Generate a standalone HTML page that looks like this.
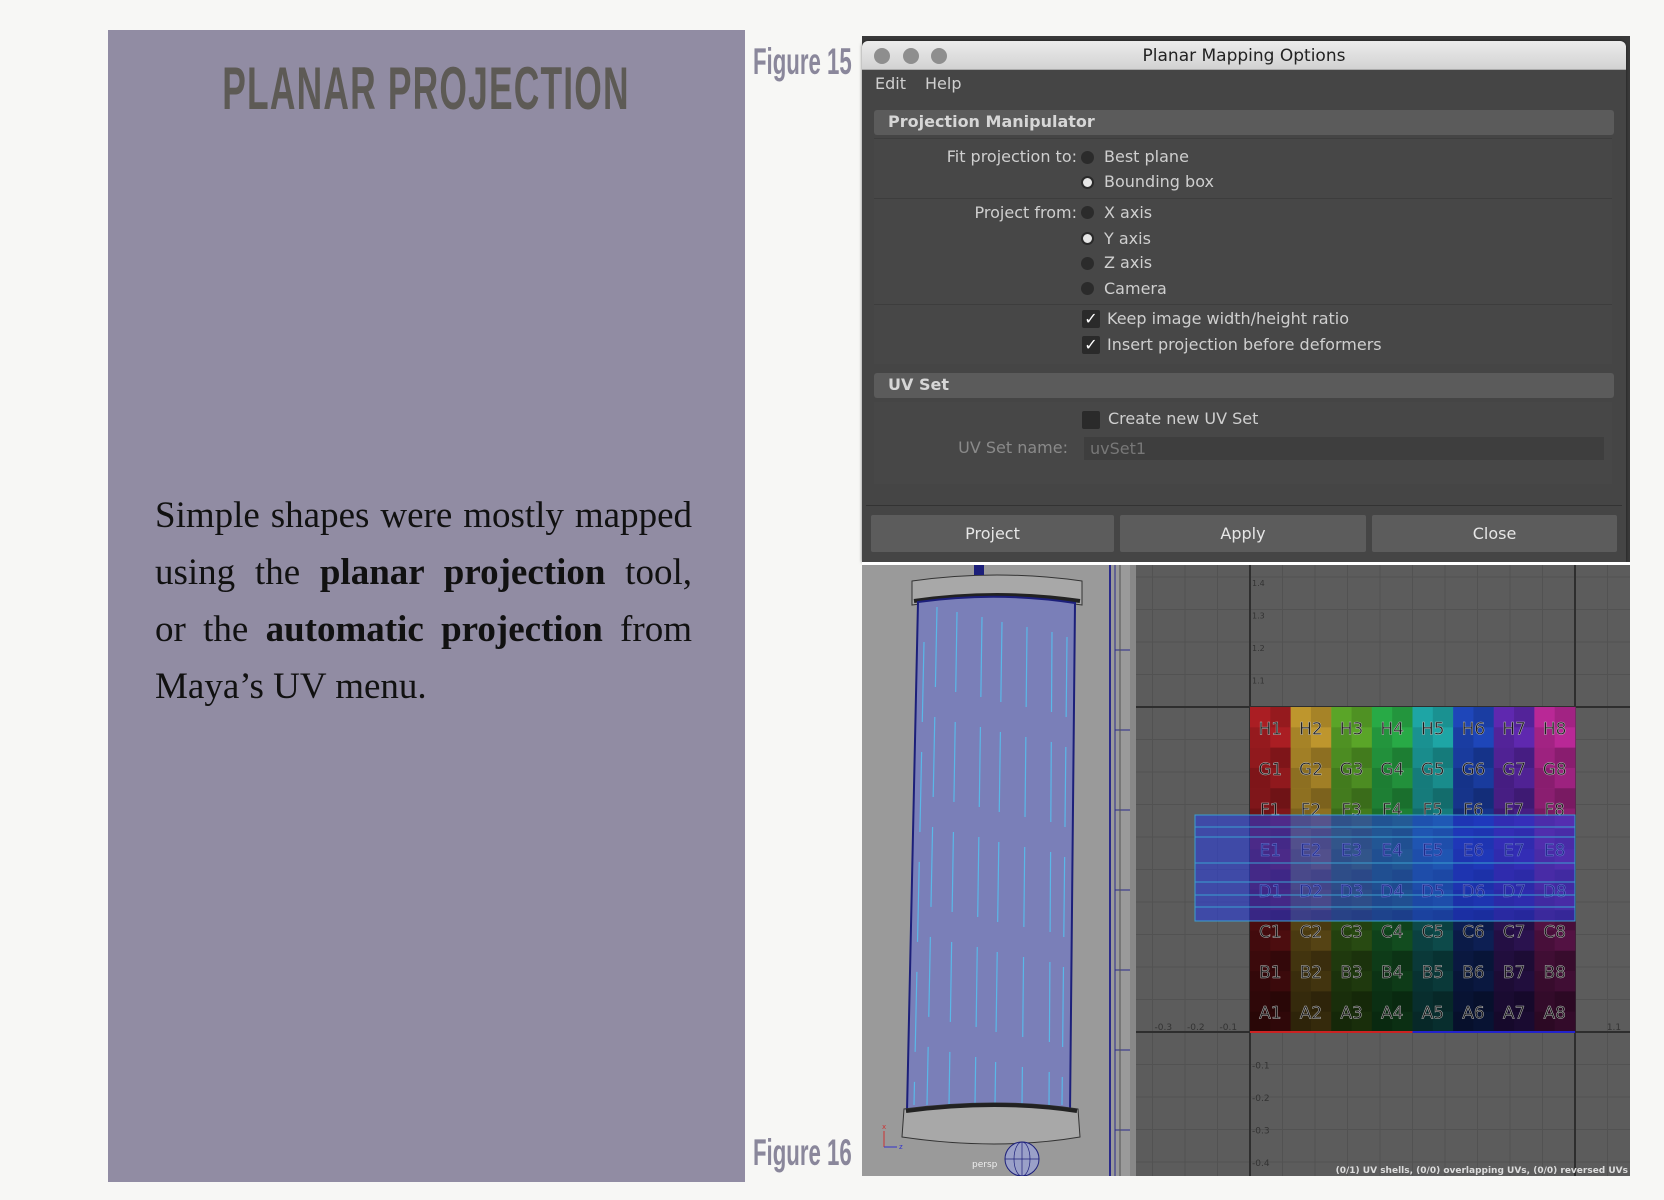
<!DOCTYPE html>
<html><head><meta charset="utf-8">
<style>
*{margin:0;padding:0;box-sizing:border-box}
html,body{width:1664px;height:1200px;overflow:hidden;background:#f7f7f5;position:relative;font-family:"DejaVu Sans","Liberation Sans",sans-serif}
.abs{position:absolute}
#panel{left:108px;top:30px;width:637px;height:1152px;background:#918ca3}
#title{left:318px;top:29px;font-family:"Liberation Sans",sans-serif;font-weight:bold;font-size:60px;color:#5d5a55;line-height:60px;white-space:nowrap;transform:translateX(-50%) scaleX(0.59);letter-spacing:2px}
#body{left:47px;top:457px;width:537px;font-family:"Liberation Serif",serif;font-size:37px;line-height:57px;color:#111}
#body div{text-align:justify;text-align-last:justify;white-space:nowrap}
#body div.last{text-align-last:left}
.fig{font-family:"Liberation Sans",sans-serif;font-weight:bold;color:#8a879b;font-size:37px;white-space:nowrap;transform:scaleX(0.6);transform-origin:left top;line-height:40px}
#dlg{left:862px;top:41px;width:764px;height:521px;background:#454545;border-radius:6px 6px 0 0;overflow:hidden;box-shadow:0 0 3px rgba(0,0,0,.5)}
#tb{left:0;top:0;width:764px;height:29px;background:linear-gradient(#ececec,#d2d2d2);border-bottom:1px solid #aaa}
.dot{width:16px;height:16px;border-radius:50%;background:#8e8e8e;top:7px}
#tt{left:0;width:764px;top:5px;text-align:center;font-size:17px;color:#222}
.t{font-size:16px;color:#cfcfcf;white-space:nowrap;position:absolute;line-height:20px}
.hdr{position:absolute;left:12px;width:740px;height:25px;background:#5b5b5b;border-radius:3px}
.hdr span{position:absolute;left:14px;top:2px;font-size:16px;font-weight:bold;color:#d6d6d6}
.sec{position:absolute;left:12px;width:738px;background:#474747;border-top:1px solid #3d3d3d}
.rad{position:absolute;width:13px;height:13px;border-radius:50%;background:#2b2b2b}
.rad.on{background:#e6e6e6;border:2px solid #2a2a2a}
.chk{position:absolute;width:18px;height:18px;background:#2a2a2a;border-radius:2px;color:#fff;font-size:16px;line-height:18px;text-align:center}
.btn{position:absolute;top:474px;height:37px;background:#5c5c5c;border-radius:2px;color:#e6e6e6;font-size:16px;text-align:center;line-height:37px}
</style></head><body>
<div id="panel" class="abs">
  <div id="title" class="abs">PLANAR PROJECTION</div>
  <div id="body" class="abs">
    <div>Simple shapes were mostly mapped</div>
    <div>using the <b>planar projection</b> tool,</div>
    <div>or the <b>automatic projection</b> from</div>
    <div class="last">Maya’s UV menu.</div>
  </div>
</div>
<div class="abs fig" style="left:753px;top:42px">Figure 15</div>
<div class="abs fig" style="left:753px;top:1133px">Figure 16</div>

<div class="abs" style="left:862px;top:36px;width:768px;height:526px;background:#3a3a3a"></div>

<svg class="abs" style="left:862px;top:565px" width="768" height="611" viewBox="0 0 768 611">
  <rect width="768" height="611" fill="#9a9a9a"/>
  <rect x="268" y="0" width="6" height="611" fill="#888"/>
  <line x1="248" y1="0" x2="248" y2="611" stroke="#2a2a8a" stroke-width="2"/>
  <line x1="253" y1="0" x2="253" y2="611" stroke="#2a2a8a" stroke-width="1"/>
  <g stroke="#2a2a8a" stroke-width="1"><line x1="253" y1="85" x2="268" y2="85"/><line x1="253" y1="165" x2="268" y2="165"/><line x1="253" y1="245" x2="268" y2="245"/><line x1="253" y1="325" x2="268" y2="325"/><line x1="253" y1="405" x2="268" y2="405"/><line x1="253" y1="485" x2="268" y2="485"/><line x1="253" y1="565" x2="268" y2="565"/></g>
  <rect x="274" y="0" width="494" height="611" fill="#5c5c5c"/>
  <g id="grid"></g>
  <path d="M50 16 Q135 4 220 16 L220 40 Q135 28 50 40 Z" fill="#a8a8a8" stroke="#333"/>
  <path d="M52 36 Q135 24 218 36" stroke="#222" stroke-width="4" fill="none"/>
  <path d="M56 37 Q135 26 213 38 L208 548 Q135 538 45 546 Z" fill="#7a7fb8" stroke="#1c1f7a" stroke-width="2"/>
  <g id="stripes"></g>
  <path d="M42 544 Q135 532 216 544 L218 572 Q135 586 40 572 Z" fill="#a8a8a8" stroke="#333"/>
  <path d="M44 546 Q135 534 215 546" stroke="#222" stroke-width="4" fill="none"/>
  <circle cx="160" cy="594" r="17" fill="#9aa0c8" stroke="#1c1f7a"/>
  <g stroke="#1c1f7a" stroke-width="0.7" fill="none"><ellipse cx="160" cy="594" rx="8" ry="17"/><line x1="143" y1="594" x2="177" y2="594"/><line x1="160" y1="577" x2="160" y2="611"/></g>
  <rect x="112" y="0" width="10" height="10" fill="#1c1f7a"/>
  <text x="110" y="602" font-size="9" fill="#eee" font-family="DejaVu Sans">persp</text>
  <line x1="22" y1="566" x2="22" y2="582" stroke="#c33"/><line x1="22" y1="582" x2="35" y2="582" stroke="#33c"/>
  <text x="20" y="564" font-size="7" fill="#c33">x</text><text x="37" y="584" font-size="7" fill="#33c">z</text>
  <g id="uv"></g>
  <text x="766" y="608" font-size="9" fill="#ddd" text-anchor="end" font-family="DejaVu Sans" font-weight="bold">(0/1) UV shells, (0/0) overlapping UVs, (0/0) reversed UVs</text>
</svg>

<div id="dlg" class="abs">
  <div id="tb" class="abs"><div class="dot abs" style="left:12px"></div><div class="dot abs" style="left:41px"></div><div class="dot abs" style="left:69px"></div><div id="tt" class="abs">Planar Mapping Options</div></div>
  <div class="t" style="left:13px;top:33px">Edit</div><div class="t" style="left:63px;top:33px">Help</div>
  <div class="hdr" style="top:69px"><span>Projection Manipulator</span></div>
  <div class="sec" style="top:97px;height:60px"></div>
  <div class="sec" style="top:157px;height:106px"></div>
  <div class="sec" style="top:263px;height:60px"></div>
  <div class="t" style="left:0;width:215px;text-align:right;top:106px">Fit projection to:</div>
  <div class="t" style="left:0;width:215px;text-align:right;top:162px">Project from:</div>
  <div class="rad" style="left:219px;top:110px"></div><div class="t" style="left:242px;top:106px">Best plane</div>
  <div class="rad on" style="left:219px;top:135px"></div><div class="t" style="left:242px;top:131px">Bounding box</div>
  <div class="rad" style="left:219px;top:165px"></div><div class="t" style="left:242px;top:162px">X axis</div>
  <div class="rad on" style="left:219px;top:191px"></div><div class="t" style="left:242px;top:188px">Y axis</div>
  <div class="rad" style="left:219px;top:216px"></div><div class="t" style="left:242px;top:212px">Z axis</div>
  <div class="rad" style="left:219px;top:241px"></div><div class="t" style="left:242px;top:238px">Camera</div>
  <div class="chk" style="left:220px;top:269px">✓</div><div class="t" style="left:245px;top:268px">Keep image width/height ratio</div>
  <div class="chk" style="left:220px;top:295px">✓</div><div class="t" style="left:245px;top:294px">Insert projection before deformers</div>
  <div class="hdr" style="top:332px"><span>UV Set</span></div>
  <div class="sec" style="top:361px;height:82px;border:none"></div>
  <div class="chk" style="left:220px;top:370px"></div><div class="t" style="left:246px;top:368px">Create new UV Set</div>
  <div class="t" style="left:0;width:206px;text-align:right;top:397px;color:#8a8a8a">UV Set name:</div>
  <div class="abs" style="left:222px;top:396px;width:520px;height:23px;background:#3e3e3e"></div>
  <div class="t" style="left:228px;top:398px;color:#777">uvSet1</div>
  <div class="abs" style="left:4px;top:464px;width:756px;height:1px;background:#333"></div>
  <div class="btn" style="left:9px;width:243px">Project</div>
  <div class="btn" style="left:258px;width:246px">Apply</div>
  <div class="btn" style="left:510px;width:245px">Close</div>
</div>
<div class="abs" style="left:862px;top:562px;width:768px;height:3px;background:#fff"></div>

<script>
const NS="http://www.w3.org/2000/svg";
function el(p,t,a,txt){const e=document.createElementNS(NS,t);for(const k in a)e.setAttribute(k,a[k]);if(txt)e.textContent=txt;p.appendChild(e);return e;}
const u0=388,sz=325,vt=142,vb=467,step=32.5;
const g=document.getElementById('grid');
for(let x=u0-4*step;x<768;x+=step)el(g,'line',{x1:x,y1:0,x2:x,y2:611,stroke:'#525252'});
for(let y=vb;y>0;y-=step)el(g,'line',{x1:274,y1:y,x2:768,y2:y,stroke:'#525252'});
for(let y=vb+step;y<611;y+=step)el(g,'line',{x1:274,y1:y,x2:768,y2:y,stroke:'#525252'});
el(g,'line',{x1:u0,y1:0,x2:u0,y2:611,stroke:'#2e2e2e','stroke-width':2});
el(g,'line',{x1:u0+sz,y1:0,x2:u0+sz,y2:611,stroke:'#2e2e2e','stroke-width':2});
el(g,'line',{x1:274,y1:vt,x2:768,y2:vt,stroke:'#2e2e2e','stroke-width':2});
el(g,'line',{x1:274,y1:vb,x2:768,y2:vb,stroke:'#2e2e2e','stroke-width':2});
[['1.4',-4],['1.3',-3],['1.2',-2],['1.1',-1]].forEach(([t,i])=>el(g,'text',{x:u0+2,y:vt+i*step+9,'font-size':8,fill:'#333'},t));
[['-0.1',1],['-0.2',2],['-0.3',3],['-0.4',4]].forEach(([t,i])=>el(g,'text',{x:u0+2,y:vb+i*step+4,'font-size':9,fill:'#333'},t));
[['-0.3',-3],['-0.2',-2],['-0.1',-1]].forEach(([t,i])=>el(g,'text',{x:u0+i*step+2,y:vb-2,'font-size':9,fill:'#333'},t));
el(g,'text',{x:u0+sz+1.2*step,y:vb-2,'font-size':9,fill:'#333','text-anchor':'middle'},'1.1');
const uv=document.getElementById('uv');
const hues=[[170,30,35],[190,150,45],[90,165,40],[40,170,70],[30,165,165],[30,70,185],[95,40,175],[185,40,150]];
const rows='HGFEDCBA';
const c=sz/8;
for(let r=0;r<8;r++){const f=[1,0.85,0.75,0.7,0.6,0.45,0.35,0.28][r];
 for(let k=0;k<8;k++){const h=hues[k];
  el(uv,'rect',{x:u0+k*c,y:vt+r*c,width:c+0.5,height:c+0.5,fill:`rgb(${h[0]*f|0},${h[1]*f|0},${h[2]*f|0})`});
  for(let a=0;a<2;a++)for(let b=0;b<2;b++)if((a+b)%2)el(uv,'rect',{x:u0+k*c+a*c/2,y:vt+r*c+b*c/2,width:c/2,height:c/2,fill:'rgba(0,0,0,0.12)'});
  el(uv,'text',{x:u0+k*c+c/2,y:vt+r*c+c/2+7,'font-size':17,'text-anchor':'middle',fill:'#1a1a1a',stroke:'#bbb','stroke-width':0.5,'font-family':'DejaVu Sans'},rows[r]+(k+1));
 }}
el(uv,'rect',{x:u0-55,y:250,width:sz+55,height:106,fill:'rgba(40,60,230,0.55)',stroke:'#3aa0d0'});
[262,272,298,317,330,342].forEach(y=>el(uv,'line',{x1:u0-55,y1:y,x2:u0+sz,y2:y,stroke:'#3aa0d0','stroke-width':1}));
el(uv,'line',{x1:u0,y1:vb,x2:u0+sz/2,y2:vb,stroke:'#c22','stroke-width':2});
el(uv,'line',{x1:u0+sz/2,y1:vb,x2:u0+sz,y2:vb,stroke:'#22c','stroke-width':2});
const s=document.getElementById('stripes');
[[75,68],[95,90],[120,116],[140,136],[165,163],[190,190],[205,203],[62,55]].forEach(([a,b],i)=>{
  el(s,'line',{x1:a,y1:42+i*5,x2:b-3,y2:540,stroke:'#5ab8e8','stroke-width':1.2,'stroke-dasharray':'80 30'});
});
</script>
</body></html>
